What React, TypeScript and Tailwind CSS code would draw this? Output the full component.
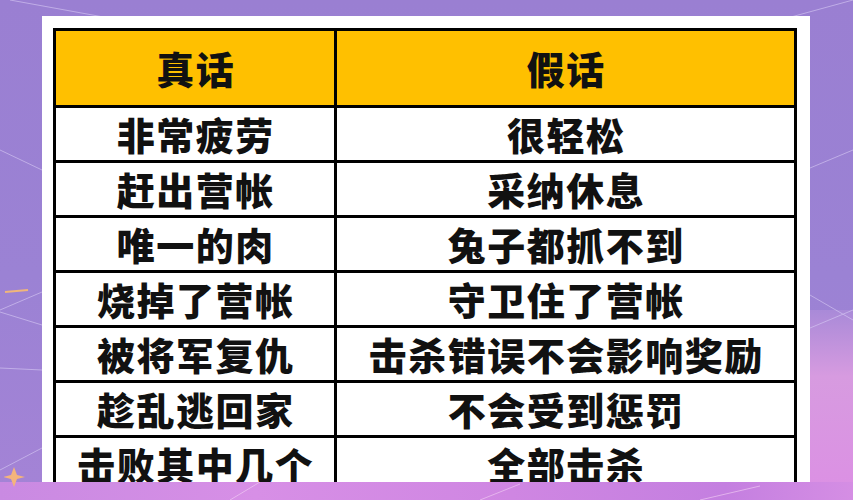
const rows: [string, string][] = [
  ["非常疲劳", "很轻松"],
  ["赶出营帐", "采纳休息"],
  ["唯一的肉", "兔子都抓不到"],
  ["烧掉了营帐", "守卫住了营帐"],
  ["被将军复仇", "击杀错误不会影响奖励"],
  ["趁乱逃回家", "不会受到惩罚"],
  ["击败其中几个", "全部击杀"],
];

const cell =
  "border-[3px] border-black text-center align-middle font-black text-[38px] tracking-[1.5px] pl-[1.5px] text-[#111] leading-none";

export default function App() {
  return (
    <div
      className="relative w-[853px] h-[500px] overflow-hidden bg-[#9a80d2]"
      style={{ fontFamily: '"Noto Sans CJK SC", "Noto Sans", sans-serif' }}
    >
      {/* background texture */}
      <div className="absolute inset-0 bg-[linear-gradient(180deg,#9a7fd2_0%,#9b82d4_55%,#a483d6_100%)]" />
      <div className="absolute right-0 top-[310px] w-[60px] h-[190px] bg-[linear-gradient(180deg,#a98ad8_0%,#d79be0_35%,#dc8fe4_100%)]" />
      <svg className="absolute inset-0" width="853" height="500" viewBox="0 0 853 500">
        <g stroke="#d9ccf5" strokeWidth="1" fill="none" opacity="0.6">
          <path d="M0 150 L42 170" />
          <path d="M0 310 L42 292" />
          <path d="M0 312 L42 325" />
          <path d="M0 368 L42 370" />
          <path d="M10 0 L120 20" />
          <path d="M810 168 L853 150" />
          <path d="M810 295 L853 320" />
          <path d="M810 328 L853 310" />
          <path d="M780 20 L853 0" />
          <path d="M0 470 L42 448" />
        </g>
        <path d="M5 292 L28 290" stroke="#f1b67a" strokeWidth="2" />
      </svg>

      <div className="relative pt-[16px] pl-[42px]">
        <div className="w-[768px] h-[484px] bg-white pt-[12px] pl-[11px] pr-[13px]">
          <table className="w-[744px] border-collapse border-[3px] border-black">
            <thead>
              <tr className="h-[77px] bg-[#ffc000]">
                <th className={`${cell} w-[281px]`}>真话</th>
                <th className={cell}>假话</th>
              </tr>
            </thead>
            <tbody>
              {rows.map(([a, b]) => (
                <tr key={a} className="h-[55px] bg-white">
                  <td className={cell}>{a}</td>
                  <td className={cell}>{b}</td>
                </tr>
              ))}
            </tbody>
          </table>
        </div>
      </div>

      {/* bottom band */}
      <div className="absolute left-0 right-0 bottom-0 h-[18px] bg-[linear-gradient(90deg,#c98ae2_0%,#d78fe6_30%,#cf86e2_60%,#c47fe0_85%,#d58ee4_100%)]">
        <svg className="absolute inset-0" width="853" height="18" viewBox="0 0 853 18">
          <g stroke="#efc7f2" strokeWidth="1" fill="none" opacity="0.7">
            <path d="M230 18 L260 0" />
            <path d="M480 18 L520 2" />
            <path d="M700 18 L760 4" />
          </g>
        </svg>
      </div>
      <svg className="absolute left-[4px] top-[465px]" width="30" height="30" viewBox="0 0 30 30">
        <path d="M10 2 L13 10 L21 12 L13 14 L10 22 L7 14 L-1 12 L7 10 Z" fill="#f4b47c" />
      </svg>
    </div>
  );
}
